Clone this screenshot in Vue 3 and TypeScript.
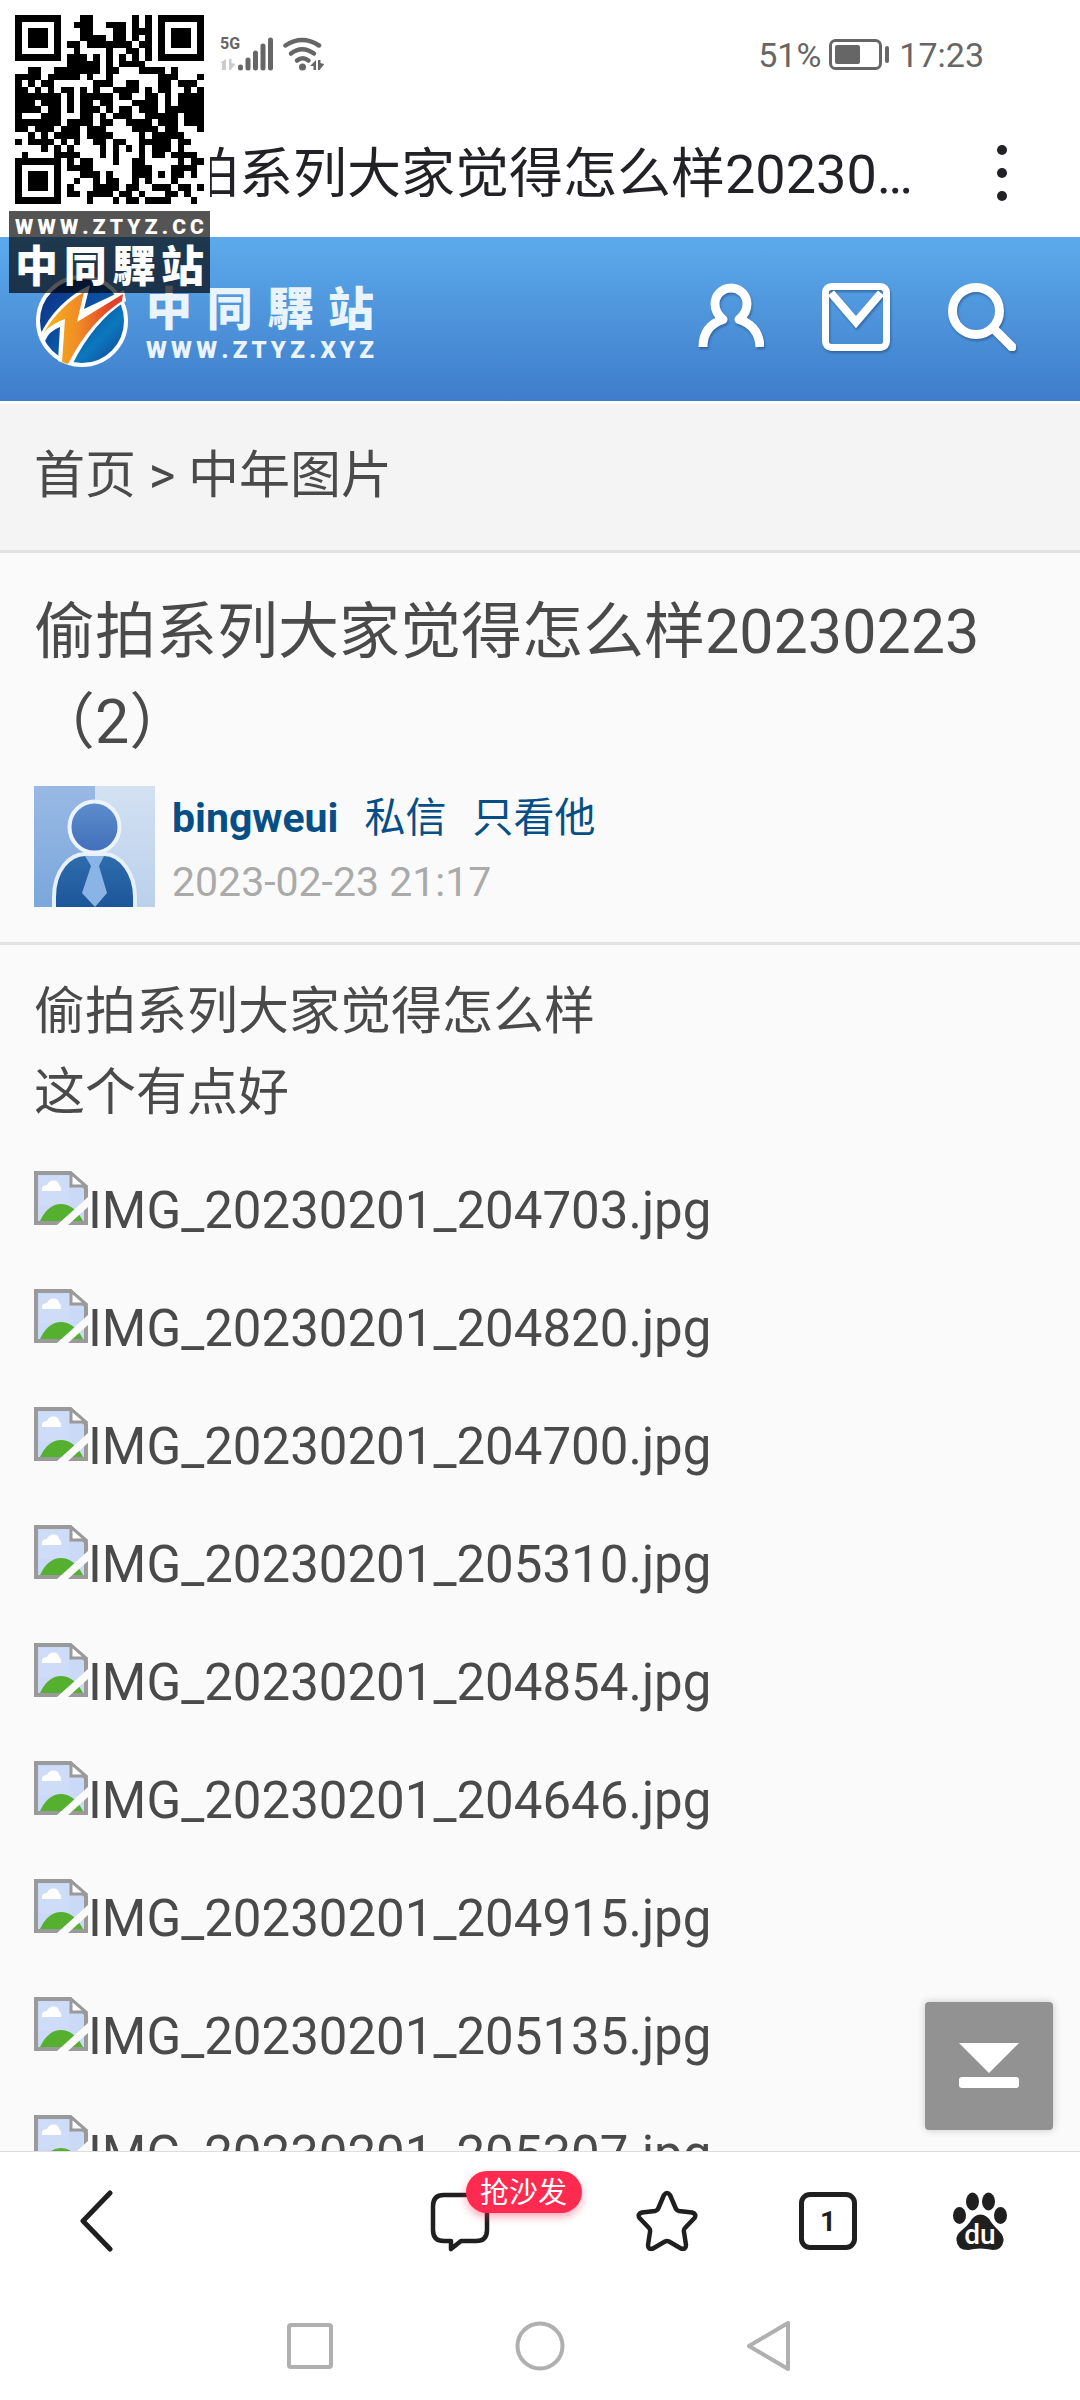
<script setup lang="ts">
const siteName: string[] = [...'中同驛站']
const stampUrl: string[] = [...'WWW.ZTYZ.CC']
const logoUrl: string[] = [...'WWW.ZTYZ.XYZ']

const files: string[] = [
  'IMG_20230201_204703.jpg',
  'IMG_20230201_204820.jpg',
  'IMG_20230201_204700.jpg',
  'IMG_20230201_205310.jpg',
  'IMG_20230201_204854.jpg',
  'IMG_20230201_204646.jpg',
  'IMG_20230201_204915.jpg',
  'IMG_20230201_205135.jpg',
  'IMG_20230201_205307.jpg',
]

const modules: string[] = [
  '#######...##......#.#.#######',
  '#.....#..###..###.#.#.#.....#',
  '#.###.#...##...##.###.#.###.#',
  '#.###.#...####.##.#.#.#.###.#',
  '#.###.#.##.#######.##.#.###.#',
  '#.....#..#....#..##.#.#.....#',
  '#######.###.#.#.#.#.#.#######',
  '........#####.#.####.........',
  '..##..#######.##...####.#....',
  '####.#####.#..#.......###...#',
  '#.#.##......###..##...##.###.',
  '##.#.#.##.#.#..####.#.##..#.#',
  '#######.#.#####.##..##.#.####',
  '###.###.#.##.##...####.#.####',
  '####.##.#.###.#.##.###.######',
  '#...###...##.#.###..#####.###',
  '#######.####.##..####.###.###',
  '##.###.###.###....####.##...#',
  '..#.#.####.####....#.#####...',
  '#.####.#.#..##.##..#####.##..',
  '....#.#.#....#.#.#.#.###.#...',
  '.#....####...#.#...#.##.####.',
  '#######.#.##...#..##.....#.##',
  '#.....#.####......###...####.',
  '#.###.#...###.#...###.#.##.#.',
  '#.###.#..#..#.##..#.#...#....',
  '#.###.#.#...####.##..###.##.#',
  '#.....#.##.####.##.#...##.#..',
  '#######....#...#.##.####...#.',
]

const qrPath: string = modules
  .flatMap((row, y) => [...row].map((c, x) => (c === '#' ? `M${x} ${y}h1v1h-1z` : '')))
  .join('')
</script>

<template>
  <div class="app">
    <div class="status">
      <div class="signals">
        <span class="net">5G</span>
        <svg class="bars" viewBox="0 0 104 36" role="img" aria-label="信号">
          <g stroke="#666" stroke-width="5" stroke-linecap="round">
            <path d="M20.500 32v-1M28 32v-8M35.500 32v-15M43 32v-22M50.500 32v-28" />
          </g>
          <path d="M0 27l6-4v11h-4v-7zM9 23h2.500v4l4 1-5 6h-1.500z" fill="#ccc" />
          <g fill="none" stroke="#666" stroke-width="4.500" stroke-linecap="round">
            <path d="M65.500 9.500Q82 -1.500 99 9.500" />
            <path d="M71 17.500Q82 9 94 17.500" />
            <path d="M77 24.500Q82.500 20 88.500 24.500" />
          </g>
          <circle cx="82.500" cy="31" r="3.500" fill="#666" />
          <path d="M90 30l6-6v10h-2.500v-4zM98 24h2.500v3l4 1-5 6h-1.500z" fill="#666" />
        </svg>
      </div>
      <div class="power">
        <span>51%</span>
        <svg class="battery" viewBox="0 0 62 32" role="img" aria-label="电池">
          <rect x="1.500" y="1.500" width="50" height="28" rx="5" fill="none" stroke="#666" stroke-width="3" />
          <rect x="6" y="6" width="25" height="19" rx="2" fill="#666" />
          <rect x="56" y="7" width="4" height="17" rx="2" fill="#666" />
        </svg>
        <span>17:23</span>
      </div>
    </div>

    <div class="titlebar">
      <div class="pagetitle">偷拍系列大家觉得怎么样20230…</div>
      <button class="more" aria-label="更多">
        <svg viewBox="0 0 12 58"><g fill="#222226"><circle cx="6" cy="6" r="5" /><circle cx="6" cy="29" r="5" /><circle cx="6" cy="52" r="5" /></g></svg>
      </button>
    </div>

    <header class="site">
      <a class="logo" href="#">
        <svg class="mark" viewBox="0 0 92 92" aria-hidden="true">
          <defs>
            <linearGradient id="ball" x1="0" y1="0" x2="1" y2="1">
              <stop offset="0" stop-color="#10287c" />
              <stop offset=".5" stop-color="#0a55a6" />
              <stop offset=".7" stop-color="#0b78bd" />
              <stop offset="1" stop-color="#173d92" />
            </linearGradient>
            <linearGradient id="flame" x1="0" y1="0" x2="1" y2="0">
              <stop offset="0" stop-color="#f7b51c" />
              <stop offset=".45" stop-color="#f08a25" />
              <stop offset=".85" stop-color="#e2402a" />
            </linearGradient>
          </defs>
          <circle cx="46" cy="46" r="44" fill="url(#ball)" stroke="#fff" stroke-width="4" />
          <path d="M4 60Q20 27 54 10L48 34 88 15 90 26Q58 46 36 90L22 86 24 52Q13 56 9 66z" fill="#fff" />
          <path d="M8 57Q24 31 48 17L41 47 87 19 86 26Q54 46 32 89L26 87 29 44Q17 48 8 57z" fill="url(#flame)" />
        </svg>
        <span class="wordmark">
          <span class="brand"><span v-for="(c, i) in siteName" :key="i">{{ c }}</span></span>
          <span class="domain"><span v-for="(c, i) in logoUrl" :key="i">{{ c }}</span></span>
        </span>
      </a>
      <nav class="tools">
        <a href="#" aria-label="我的">
          <svg viewBox="0 0 68 68">
            <path d="M7 64Q7 43 27 36.500Q19 30 19 21A16 16 0 0 1 51 21Q51 30 43 36.500Q63 43 64 64" fill="none" stroke="#fff" stroke-width="9" stroke-linejoin="round" />
          </svg>
        </a>
        <a href="#" aria-label="消息">
          <svg viewBox="0 0 68 68">
            <rect x="3.500" y="3.500" width="61" height="61" rx="6" fill="none" stroke="#fff" stroke-width="7" />
            <path d="M9 10L34 39 59 10" fill="none" stroke="#fff" stroke-width="8" />
          </svg>
        </a>
        <a href="#" aria-label="搜索">
          <svg viewBox="0 0 68 68">
            <circle cx="28" cy="28" r="23.500" fill="none" stroke="#fff" stroke-width="9" />
            <path d="M46 46L64 64" stroke="#fff" stroke-width="9" stroke-linecap="round" />
          </svg>
        </a>
      </nav>
    </header>

    <main class="content">
      <nav class="crumbs"><a href="#">首页</a> &gt; <a href="#">中年图片</a></nav>

      <section class="head">
        <h1>偷拍系列大家觉得怎么样20230223（2）</h1>
        <div class="author">
          <svg class="avatar" viewBox="0 0 121 121" role="img" aria-label="头像">
            <defs>
              <linearGradient id="bgl" x1="0" y1="0" x2="0" y2="1"><stop offset="0" stop-color="#99b9e4" /><stop offset="1" stop-color="#7aa7dc" /></linearGradient>
              <linearGradient id="bgr" x1="0" y1="0" x2="0" y2="1"><stop offset="0" stop-color="#d3e1f2" /><stop offset="1" stop-color="#bad0ec" /></linearGradient>
              <linearGradient id="face" x1="0" y1="0" x2="0" y2="1"><stop offset="0" stop-color="#5e8dcd" /><stop offset="1" stop-color="#416fba" /></linearGradient>
              <linearGradient id="coat" x1="0" y1="0" x2="0" y2="1"><stop offset="0" stop-color="#2e6dac" /><stop offset="1" stop-color="#1c559a" /></linearGradient>
            </defs>
            <rect width="61" height="121" fill="url(#bgl)" />
            <rect x="61" width="60" height="121" fill="url(#bgr)" />
            <path d="M20 123V111C20 84 36 68 51 68H70C87 68 101 88 101 111V123" fill="url(#coat)" stroke="#e7eff8" stroke-width="4" />
            <ellipse cx="60.500" cy="41" rx="25" ry="25.500" fill="url(#face)" stroke="#edf3fa" stroke-width="4" />
            <path d="M51 70H70L65 80 73 107 61 121 48 107 57 80z" fill="#8bb4e6" />
          </svg>
          <div class="meta">
            <div class="links">
              <a class="user" href="#">bingweui</a>
              <a href="#">私信</a>
              <a href="#">只看他</a>
            </div>
            <time datetime="2023-02-23T21:17">2023-02-23 21:17</time>
          </div>
        </div>
      </section>

      <article class="post">
        <p>偷拍系列大家觉得怎么样<br />这个有点好</p>
        <ul>
          <li v-for="name in files" :key="name">
            <svg class="broken" viewBox="0 0 54 54" aria-hidden="true">
              <path d="M2 2H37L52 17V52H2z" fill="#c9d9f6" stroke="#9a9a9a" stroke-width="4" />
              <path d="M5 5H35V34H5z" fill="#d3e0f8" opacity=".5" />
              <path d="M8 20Q7 14 13 14Q15 9 20 9.500Q25 10 25 14Q28 16 27 20z" fill="#fff" />
              <path d="M6 50Q14 33 27 33Q40 33 49 50z" fill="#56b030" />
              <path d="M37 0L54 17V0z" fill="#fafafa" />
              <path d="M37 2V15H52z" fill="#fff" stroke="#9a9a9a" stroke-width="3" />
              <path d="M54 26V36L34 54H23z" fill="#fafafa" />
            </svg>
            <span>{{ name }}</span>
          </li>
        </ul>
      </article>

      <button class="tobottom" aria-label="到底部">
        <svg viewBox="0 0 60 46"><path d="M0 0H60L30 30z" fill="#fff" /><rect y="34" width="60" height="11" rx="3" fill="#fff" /></svg>
      </button>
    </main>

    <nav class="toolbar">
      <button class="back" aria-label="返回">
        <svg viewBox="0 0 62 62"><path d="M44 3L17 31 44 59" fill="none" stroke="#1f1f1f" stroke-width="5" stroke-linecap="round" stroke-linejoin="round" /></svg>
      </button>
      <button class="comment" aria-label="评论">
        <svg viewBox="0 0 62 62"><path d="M15 5H47Q58 5 58 16V40Q58 51 47 51H32L22 59V51H15Q4 51 4 40V16Q4 5 15 5z" fill="none" stroke="#1f1f1f" stroke-width="4.500" stroke-linejoin="round" /></svg>
        <span class="badge">抢沙发</span>
      </button>
      <button aria-label="收藏">
        <svg viewBox="0 0 62 62"><path d="M28 5Q31 1 34 5L40 19Q41 20.500 43 21L56 22.500Q61 24 58.500 28L49 38Q47.500 39.500 48 42L50 55Q50 60 45 58.500L33 51.500Q31 50.500 29 51.500L17 58.500Q12 60 12 55L14 42Q14.500 39.500 13 38L3.500 28Q1 24 6 22.500L19 21Q21 20.500 22 19z" fill="none" stroke="#1f1f1f" stroke-width="4.500" stroke-linejoin="round" /></svg>
      </button>
      <button class="tabs" aria-label="标签页"><span>1</span></button>
      <button aria-label="百度">
        <svg viewBox="0 0 62 62">
          <g fill="#1f1f1f">
            <ellipse cx="23.500" cy="11.500" rx="6.500" ry="9" />
            <ellipse cx="39.500" cy="11.500" rx="6.500" ry="9" />
            <ellipse cx="10.500" cy="25.500" rx="6.500" ry="8.500" />
            <ellipse cx="51.500" cy="25.500" rx="6.500" ry="8.500" />
            <path d="M31.500 24.500Q38 24.500 42 32Q45 36 50 41Q55 46 54.500 51Q53 60 44 60Q31 57 19 60Q8 60 7.500 50Q7 45 12 41Q18 36 21 32Q25 24.500 31.500 24.500z" />
          </g>
          <text x="31" y="54" text-anchor="middle" fill="#fff" font-size="28" font-weight="500">du</text>
        </svg>
      </button>
    </nav>

    <nav class="system">
      <button aria-label="最近任务"><svg viewBox="0 0 50 50"><rect x="4" y="4" width="42" height="42" rx="2" fill="none" stroke="#b0b0b0" stroke-width="4" /></svg></button>
      <button aria-label="主屏幕"><svg viewBox="0 0 50 50"><circle cx="25" cy="25" r="22.500" fill="none" stroke="#b0b0b0" stroke-width="4" /></svg></button>
      <button aria-label="后退"><svg viewBox="0 0 50 50"><path d="M43 2V48L4 25z" fill="none" stroke="#b0b0b0" stroke-width="4" stroke-linejoin="round" /></svg></button>
    </nav>

    <aside class="stamp">
      <svg class="qr" viewBox="0 0 29 29" shape-rendering="crispEdges" aria-hidden="true"><path :d="qrPath" /></svg>
      <div class="label">
        <div class="stampurl"><span v-for="(c, i) in stampUrl" :key="i">{{ c }}</span></div>
        <div class="stampname"><span v-for="(c, i) in siteName" :key="i">{{ c }}</span></div>
      </div>
    </aside>
  </div>
</template>

<style>
body {
  background: #fff;
}
</style>

<style scoped>
.app {
  position: relative;
  display: flex;
  flex-direction: column;
  height: 100vh;
  overflow: hidden;
  background: #fff;
  color: #4a4a4a;
  font-family: Roboto, "Noto Sans CJK SC", sans-serif;
}
button {
  padding: 0;
  border: 0;
  background: none;
  color: inherit;
  font-family: inherit;
}
a {
  color: inherit;
  text-decoration: none;
}
svg {
  display: block;
}
.status {
  display: flex;
  flex: none;
  justify-content: space-between;
  height: 108px;
  padding: 0 96px 0 220px;
  color: #666;
}
.signals {
  display: flex;
  padding-top: 36px;
}
.net {
  width: 0;
  white-space: nowrap;
  font-size: 16px;
  font-weight: 700;
  line-height: 16px;
}
.bars {
  width: 104px;
  height: 36px;
}
.power {
  display: flex;
  align-items: center;
  height: 110px;
  gap: 8px;
  font-size: 34px;
}
.battery {
  width: 62px;
  height: 32px;
}
.titlebar {
  display: flex;
  flex: none;
  align-items: center;
  justify-content: space-between;
  height: 129px;
  padding: 0 72px 0 131px;
  color: #222226;
}
.pagetitle {
  padding-top: 4px;
  font-size: 54px;
  line-height: 124px;
  white-space: nowrap;
}
.more svg {
  width: 12px;
  height: 58px;
}
.site {
  display: flex;
  flex: none;
  align-items: center;
  justify-content: space-between;
  height: 164px;
  padding: 0 64px 0 36px;
  background: linear-gradient(#5caaeb, #3f7dcb);
  border-bottom: 3px solid #fff;
  box-sizing: content-box;
}
.logo {
  display: flex;
  align-items: center;
  padding-top: 4px;
  gap: 18px;
}
.mark {
  width: 92px;
  height: 92px;
}
.wordmark {
  display: flex;
  flex-direction: column;
  width: 228px;
  padding-top: 4px;
  color: #eaf4ff;
}
.brand,
.domain,
.stampurl,
.stampname {
  display: flex;
  justify-content: space-between;
}
.brand {
  font-family: "Noto Sans CJK TC", sans-serif;
  font-size: 46px;
  font-weight: 900;
  line-height: 54px;
}
.domain {
  font-size: 24px;
  font-weight: 900;
  line-height: 36px;
}
.tools {
  display: flex;
  padding-bottom: 4px;
  gap: 58px;
}
.tools svg {
  width: 68px;
  height: 68px;
  filter: drop-shadow(1px 2px 1px rgba(30, 60, 110, 0.5));
}
.content {
  position: relative;
  flex: 1;
  min-height: 0;
  overflow: hidden;
  background: #fafafa;
}
.crumbs {
  padding: 0 34px 2px;
  background: #f4f4f4;
  border-bottom: 3px solid #e2e2e2;
  font-size: 51px;
  line-height: 144px;
}
.head {
  padding: 34px 34px 28px;
  border-bottom: 3px solid #e2e2e2;
}
h1 {
  margin: 0 0 19px;
  font-size: 61px;
  font-weight: 400;
  line-height: 90px;
}
.author {
  display: flex;
  gap: 17px;
}
.avatar {
  flex: none;
  width: 121px;
  height: 121px;
}
.meta {
  font-size: 41px;
  line-height: 64px;
}
.links {
  display: flex;
  gap: 26px;
  color: #064f86;
}
.user {
  font-weight: 700;
}
time {
  display: block;
  color: #aaa;
}
.post {
  padding: 26px 34px 0;
  font-size: 51px;
}
.post p {
  margin: 0 0 19px;
  line-height: 81px;
}
.post ul {
  margin: 0;
  padding: 0;
  list-style: none;
}
.post li {
  display: flex;
  height: 118px;
  line-height: 118px;
}
.broken {
  flex: none;
  width: 54px;
  height: 54px;
  margin-top: 19px;
}
.tobottom {
  position: absolute;
  right: 27px;
  bottom: 21px;
  display: flex;
  align-items: center;
  justify-content: center;
  width: 128px;
  height: 128px;
  border-radius: 4px;
  background: #929292;
  box-shadow: 0 0 8px rgba(0, 0, 0, 0.2);
}
.tobottom svg {
  width: 60px;
  height: 46px;
}
.toolbar {
  display: grid;
  flex: none;
  grid-template-columns: 194fr 162fr 207fr 207fr 116fr 188fr 6fr;
  align-items: center;
  justify-items: center;
  height: 138px;
  border-top: 1px solid #ddd;
}
.toolbar button {
  width: 62px;
  height: 62px;
}
.toolbar svg {
  width: 62px;
  height: 62px;
}
.toolbar .comment {
  position: relative;
  grid-column: 3;
}
.badge {
  position: absolute;
  top: -19px;
  left: 37px;
  width: 116px;
  height: 42px;
  border-radius: 21px;
  background: #ff2a50;
  box-shadow: 0 4px 8px rgba(255, 42, 80, 0.4);
  color: #fff;
  font-size: 29px;
  line-height: 44px;
}
.toolbar .tabs {
  width: 58px;
  height: 58px;
  border: 5px solid #1f1f1f;
  border-radius: 11px;
  color: #1f1f1f;
  font-size: 28px;
  font-weight: 700;
}
.system {
  display: flex;
  flex: none;
  align-items: center;
  justify-content: center;
  gap: 180px;
  height: 108px;
  padding-top: 2px;
}
.system svg {
  width: 50px;
  height: 50px;
}
.stamp {
  position: absolute;
  top: 9px;
  left: 9px;
  width: 201px;
}
.qr {
  width: 189px;
  height: 189px;
  padding: 6px 6px 7px;
  background: #fff;
}
.label {
  padding: 4px 6px 5px;
  background: rgba(0, 0, 0, 0.67);
  color: #fff;
}
.stampurl {
  font-size: 21px;
  font-weight: 900;
  line-height: 24px;
}
.stampname {
  font-family: "Noto Sans CJK TC", sans-serif;
  font-size: 43px;
  font-weight: 900;
  line-height: 49px;
}
</style>
